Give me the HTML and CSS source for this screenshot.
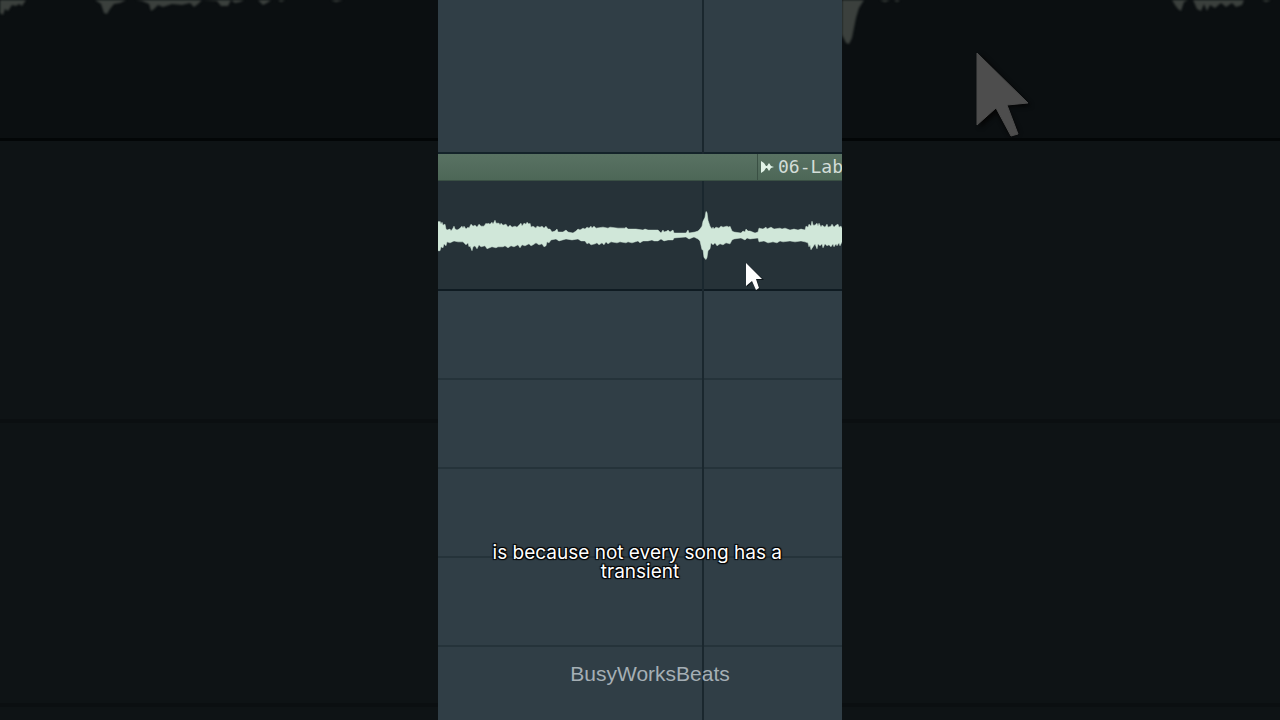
FILE: index.html
```html
<!DOCTYPE html>
<html lang="en">
<head>
<meta charset="utf-8">
<title>BusyWorksBeats</title>
<link rel="stylesheet" href="styles.css">
</head>

<body>
<div class="stage">

<div class="side">
<div class="side-clip">
<svg class="side-art" viewBox="0 0 438 138" preserveAspectRatio="xMinYMin slice" aria-hidden="true">
<path class="dim-wave" d="M0 0V13L3 15L5 9L8 11L12 5L16 6L19 4L22 6L26 0ZM95 0L101 4L104 13L107 14L110 9L114 4L120 3L126 0ZM136 0L142 1L149 4L151 11L154 9L158 5L163 7L172 4L182 5L190 3L194 7L198 4L202 0L217 1L221 6L228 6L231 0L235 3L240 2L244 0L258 0L263 5L267 3L271 0ZM278 0L281 2L285 0ZM331 0L336 2L343 0Z"/>
</svg>
</div>
<div class="side-lane side-lane-first"></div>
<div class="side-lane"></div>
<div class="side-lane side-lane-last"></div>
</div>

<main class="video">
<div class="bar-line"></div>
<div class="lane lane-top"></div>

<section class="clip">
<div class="clip-head">
<div class="clip-prev"></div>
<div class="clip-name">
<svg class="clip-icon" viewBox="0 0 14 14" aria-hidden="true">
<path d="M1 1L4 3L6 6H7L9 3L11 6L14 7L11 8L9 11L7 8H6L4 11L1 13Z"/>
</svg>
<span>06-Lab</span>
</div>
</div>
<svg class="wave" viewBox="0 0 404 110" preserveAspectRatio="none" aria-hidden="true">
<path d="M0 41L1 42L2 41L3 44L4 42L5 45L7 44L8 49L9 50L12 49L13 51L15 48L16 46L17 49L19 50L21 49L22 48L24 46L25 48L26 46L28 49L30 47L31 48L33 44L35 46L37 45L39 47L41 44L43 46L46 46L48 43L49 44L50 43L52 44L54 42L55 44L57 40L58 43L61 43L62 45L63 43L65 45L68 44L70 47L72 45L74 47L77 46L79 47L81 45L83 43L84 46L86 43L88 44L89 42L91 44L92 43L93 47L95 46L98 48L99 46L102 47L104 46L106 48L108 46L110 49L112 49L114 52L117 51L119 49L120 52L125 52L128 50L130 52L135 53L138 51L140 49L142 50L145 48L147 49L149 47L151 48L153 46L154 48L156 46L158 48L165 47L170 48L172 47L180 48L187 48L188 47L190 49L198 49L205 50L207 49L210 50L220 50L223 53L225 50L226 52L229 51L230 50L232 52L235 50L236 53L248 53L250 50L251 53L257 52L260 51L262 49L264 46L265 41L267 37L268 31L269 32L270 40L272 46L274 49L275 47L276 49L278 47L281 48L283 46L285 47L289 46L291 47L292 46L294 51L296 52L303 53L305 51L307 52L308 49L310 51L312 51L317 53L320 52L321 48L325 49L328 47L329 49L333 47L336 49L342 48L344 49L347 48L352 50L356 49L360 50L363 49L367 50L368 46L370 47L371 44L373 46L374 41L375 45L377 45L379 43L380 46L381 43L383 47L384 45L387 47L389 44L390 47L393 46L394 44L396 47L398 45L400 44L401 47L403 46L404 48V62L402 66L401 63L399 66L398 64L396 67L395 64L393 67L391 65L389 66L387 64L385 68L384 64L382 66L380 64L379 69L377 64L375 67L373 70L372 65L371 67L370 63L367 62L363 61L357 62L352 61L345 62L342 61L339 63L335 62L330 63L326 61L321 62L320 58L312 59L309 58L307 60L303 58L296 59L294 60L292 64L288 63L285 65L282 64L279 66L277 63L275 65L273 63L272 69L270 71L269 78L268 80L266 78L265 70L264 70L262 61L260 59L256 57L251 59L248 57L236 58L235 60L230 60L226 61L223 59L220 61L216 61L214 60L210 61L205 61L202 63L200 61L194 63L190 62L188 63L182 62L179 63L173 62L170 64L168 62L166 65L164 63L161 65L159 63L157 64L153 65L151 63L149 64L147 61L143 61L140 59L134 60L128 59L121 61L118 59L113 60L111 63L109 62L108 66L106 67L104 64L101 65L98 63L95 65L93 66L91 64L87 66L84 65L82 68L80 65L76 67L73 66L70 68L67 66L65 67L60 67L58 68L54 67L49 69L47 66L43 67L41 65L39 69L37 66L35 67L34 71L32 66L31 67L30 63L28 65L25 62L20 62L16 61L12 63L9 62L8 66L6 64L5 68L3 67L2 71L0 71Z"/>
</svg>
</section>

<div class="lane"></div>
<div class="lane"></div>
<div class="lane"></div>
<div class="lane"></div>
<div class="lane lane-rest"></div>

<svg class="pointer" viewBox="0 0 20 30" aria-hidden="true">
<path class="pointer-shadow" d="M3 3V26L8 21L13 30L16 29L13 19L20 19Z"/>
<path class="pointer-face" d="M2 2V25L8 20L12 29L15 27L12 18H18Z"/>
</svg>

<div class="overlay">
<p class="caption">is because not every song has a&nbsp;<br>transient</p>
<p class="watermark">BusyWorksBeats</p>
</div>
</main>

<div class="side">
<div class="side-clip">
<svg class="side-art" viewBox="0 0 438 138" preserveAspectRatio="xMinYMin slice" aria-hidden="true">
<path class="dim-wave" d="M0 0V35L4 43L7 44L10 38L14 18L17 8L22 0ZM38 0L43 2L48 0L52 0L55 2L58 0ZM330 0L333 5L336 9L339 11L342 2L346 0L351 0L355 9L359 11L362 4L365 11L368 5L373 8L379 3L384 7L390 3L394 7L400 5L402 0ZM420 0L424 2L429 0Z"/>
<path class="dim-shadow" d="M138 54V128L155 113L169 137L177 133L165 107L189 106Z"/>
<path class="dim-pointer" d="M135 53V125L154 108L169 136L176 134L165 105L186 103Z"/>
</svg>
</div>
<div class="side-lane side-lane-first"></div>
<div class="side-lane"></div>
<div class="side-lane side-lane-last"></div>
</div>

</div>
</body>
</html>
```
FILE: styles.css
```css
body { margin:0; background-color:#0e1315; }
p { margin:0; }
svg { display:block; }

.stage { display:flex; height:100vh; overflow:hidden; }

/* dimmed, enlarged copy of the playlist on both sides */
.side { flex:1; min-width:0; display:flex; flex-direction:column; background-color:#0e1315; }
.side-clip { height:138px; background-color:#0b0f11; border-bottom:3px solid #030607; }
.side-art { width:100%; height:100%; }
.side-lane { height:280px; border-bottom:4px solid #0b0f11; }
.side-lane-first { height:278px; }
.side-lane-last { flex:1; height:auto; border-bottom:0; }
.dim-wave { fill:#3b403d; filter:blur(1px); }
.dim-pointer { fill:#4d4d4d; stroke:#4d4d4d; stroke-linejoin:round; }
.dim-shadow { fill:#050505; filter:blur(2px); }

.video { position:relative; height:100%; aspect-ratio:101/180; display:flex; flex-direction:column; overflow:hidden; background-color:#303e46; }
.bar-line { position:absolute; top:0; bottom:0; left:264px; width:2px; background-color:#1a272e; }
.lane { box-sizing:border-box; flex:none; height:89px; border-bottom:2px solid #25333a; }
.lane-top { height:154px; border-bottom:2px solid #14232a; }
.lane-rest { flex:1; border-bottom:0; }

.clip { border-bottom:2px solid #0f1b22; background-color:#263238; }
.clip-head { position:relative; display:flex; height:27px; overflow:hidden; background-image:linear-gradient(#597263,#4d6757); border-bottom:1px solid #3a5044; box-sizing:border-box; }
.clip-prev { width:320px; flex:none; border-right:1px solid #3a5044; box-sizing:border-box; }
.clip-name { display:flex; align-items:center; gap:4px; padding-left:2px; color:#d3ddd8; font-family:"DejaVu Sans Mono",monospace; font-size:18px; line-height:24px; white-space:nowrap; }
.clip-icon { width:14px; height:14px; fill:#e2f3e8; }
.wave { position:relative; width:100%; height:108px; fill:#d0e7d9; stroke:#d0e7d9; stroke-opacity:0.5; }

.pointer { position:absolute; left:306px; top:261px; width:20px; height:30px; }
.pointer-face { fill:#ffffff; }
.pointer-shadow { fill:#10181c; }

.overlay { position:absolute; left:0; right:0; bottom:34px; text-align:center; }
.caption { color:#ffffff; font-family:Inter,sans-serif; font-size:19px; font-weight:400; line-height:19px; text-shadow:-1px -1px 1px #000,1px -1px 1px #000,-1px 1px 1px #000,1px 1px 1px #000; }
.watermark { margin-top:81px; padding-left:20px; color:#a5afb5; font-family:"Liberation Sans",Arial,sans-serif; font-size:21px; line-height:24px; }
```
